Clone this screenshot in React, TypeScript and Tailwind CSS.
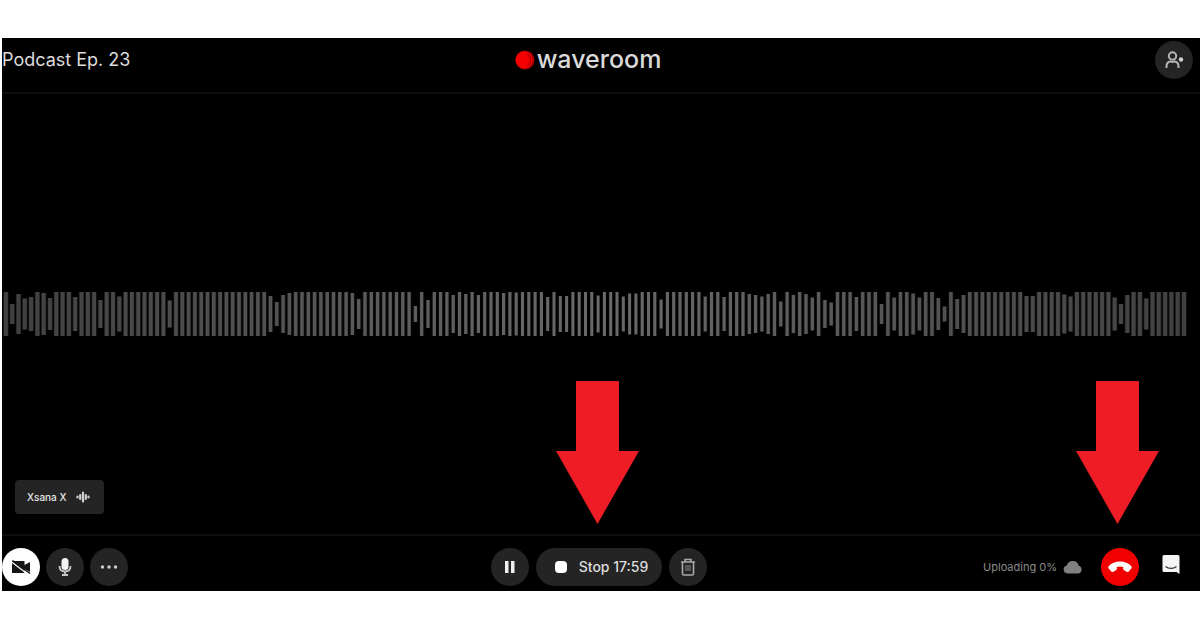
import type { ReactNode } from 'react'

const FULL = 44
const PITCH = 6.3

// Bar heights of the recorded track, left to right
const LEVELS: number[] = [
  44, 20, 40, 31, 34, 44, 42, 32, 44, 44, 44, 34, 44, 44, 44, 28, 44, 44, 35, 44,
  44, 44, 44, 44, 44, 44, 27, 44, 44, 44, 44, 44, 44, 44, 44, 44, 44, 44, 44, 44,
  44, 44, 36, 24, 38, 42, 44,
  44, 44, 44, 44, 44, 44, 44, 44, 42, 30, 44, 44, 44, 44, 44, 44, 44, 44, 16, 44,
  28, 44, 44, 44, 38, 44, 40, 44, 38, 44, 44, 44, 42, 44, 43, 44, 44, 44, 44, 34,
  44, 36, 36, 44, 44, 44, 44, 37,
  44, 44, 44, 35, 41, 41, 44, 44, 44, 29, 44, 44, 44, 44, 44, 44, 35, 44, 44, 34,
  44, 44, 44, 40, 38, 35, 40, 44, 25, 44, 38, 44, 40, 33, 44, 28, 23, 44, 44, 44,
  34, 44, 44, 44, 20, 44, 33,
  44, 44, 41, 33, 44, 44, 32, 15, 44, 30, 38, 44, 44, 44, 44, 44, 44, 44, 44, 44,
  36, 36, 44, 44, 44, 44, 39, 35, 44, 44, 44, 44, 44, 44, 33, 20, 38, 44, 44, 31,
  44, 44, 44, 44, 44, 44,
]

function Waveform() {
  const mid = LEVELS.length / 2
  return (
    <svg
      className="block h-11 w-full"
      viewBox={`0 0 1198 ${FULL}`}
      preserveAspectRatio="none"
      aria-hidden="true"
    >
      {LEVELS.map((level, i) => {
        // bars get wider, darker and closer together away from the middle
        const edge = Math.abs(i - mid) / mid
        const width = 3 + edge
        const shade = Math.round(106 - edge * 42)
        const gap = Math.round(edge * 26)
        const x = 3.9 + i * PITCH
        const y = (FULL - level) / 2
        return (
          <g key={i}>
            <rect x={x - 2.7} y={y} width={5.4} height={level} fill={`rgb(${gap},${gap},${gap})`} />
            <rect x={x - width / 2} y={y} width={width} height={level} fill={`rgb(${shade},${shade},${shade})`} />
          </g>
        )
      })}
    </svg>
  )
}

function RoundButton({ label, className, children }: { label: string; className: string; children: ReactNode }) {
  return (
    <button
      type="button"
      aria-label={label}
      className={`flex size-[38px] shrink-0 items-center justify-center rounded-full ${className}`}
    >
      {children}
    </button>
  )
}

function Arrow() {
  return (
    <svg width="83" height="143" viewBox="0 0 83 143" fill="#ee1c25" aria-hidden="true">
      <path d="M20 0h43v70h20L41.500 143 0 70h20z" />
    </svg>
  )
}

function Logo() {
  return (
    <div className="flex items-center gap-0.5 pr-[26px]">
      <svg width="20" height="20" viewBox="0 0 20 20" aria-hidden="true">
        <circle cx="10" cy="10" r="9.500" fill="#a80000" />
        <circle cx="9" cy="10" r="8.500" fill="#f40000" />
        <path d="M12.500 4.500a6.500 6.500 0 0 1 0 11" fill="none" stroke="#b00000" strokeWidth="1.300" />
      </svg>
      <span className="pb-0.5 text-[25px] leading-7 font-medium text-[#dadada]">waveroom</span>
    </div>
  )
}

export default function App() {
  return (
    <div className="bg-white pt-[38px] pl-0.5 font-['Inter',sans-serif]">
      <main className="bg-black text-white">
        <header className="grid grid-cols-[1fr_auto_1fr] items-center border-b-2 border-[#0e0e0e] pt-[3px] pb-[13px]">
          <h1 className="text-lg leading-6 text-[#dcdcdc]">Podcast Ep. 23</h1>
          <Logo />
          <div className="flex justify-end pr-[7px]">
            <RoundButton label="Invite guest" className="bg-[#242424]">
              <svg width="20" height="20" viewBox="0 0 20 20" fill="none" stroke="#b4b4b4" strokeWidth="2" aria-hidden="true">
                <circle cx="8.500" cy="6" r="3.700" />
                <path d="M2.500 18v-1.500c0-2.800 1.600-4.500 3.500-5M14.500 18v-1.500c0-2.800-1.600-4.500-3.500-5M5.500 11c2 1.200 4 1.200 6 0" />
                <circle cx="17" cy="9.500" r="2.200" fill="#d0d0d0" stroke="none" />
              </svg>
            </RoundButton>
          </div>
        </header>

        <section className="relative py-[198px]">
          <Waveform />

          <div className="absolute bottom-5 left-[13px] flex h-[34px] items-center gap-2.5 rounded bg-[#242424] pr-3.5 pl-3 text-[10px] leading-4 font-medium text-[#e6e6e6]">
            <span>Xsana X</span>
            <svg width="14" height="12" viewBox="0 0 14 12" stroke="#d0d0d0" strokeWidth="2.200" strokeLinecap="round" aria-hidden="true">
              <path d="M1.500 5.500v1M4.200 4v4M7 1.500v9M9.800 4v4M12.500 5.500v1" />
            </svg>
          </div>

          {/* Callouts over the stop and leave controls */}
          <div className="absolute bottom-2.5 left-1/2 -ml-[45px]">
            <Arrow />
          </div>
          <div className="absolute right-[41px] bottom-2.5">
            <Arrow />
          </div>
        </section>

        <footer className="grid grid-cols-[1fr_auto_1fr] items-center border-t-2 border-[#0e0e0e] pt-3 pb-[5px]">
          <div className="flex gap-1.5">
            <RoundButton label="Turn camera on" className="bg-white">
              <svg width="20" height="16" viewBox="0 0 20 16" aria-hidden="true">
                <path d="M1 2h12.500v4L19 3v10l-5.500-3v4H1z" fill="#161616" />
                <path d="M0 2.500 17 15.500" stroke="#ffffff" strokeWidth="1.200" />
                <path d="M1.500 1.500 19 14.500" stroke="#161616" strokeWidth="1.500" />
              </svg>
            </RoundButton>
            <RoundButton label="Mute microphone" className="bg-[#242424]">
              <svg width="14" height="20" viewBox="0 0 14 20" aria-hidden="true">
                <rect x="3.500" y="1" width="7" height="12" rx="3.500" fill="#f2f2f2" />
                <path d="M1.500 9c0 3.800 2.500 5.500 5.500 5.500s5.500-1.700 5.500-5.500M7 14.500v3.500M4 18h6" fill="none" stroke="#c8c8c8" strokeWidth="1.800" />
              </svg>
            </RoundButton>
            <RoundButton label="More options" className="bg-[#242424]">
              <svg width="18" height="4" viewBox="0 0 18 4" fill="#cfcfcf" aria-hidden="true">
                <circle cx="2.500" cy="2" r="1.700" />
                <circle cx="9" cy="2" r="1.700" />
                <circle cx="15.500" cy="2" r="1.700" />
              </svg>
            </RoundButton>
          </div>

          <div className="flex gap-[7px] pr-1">
            <RoundButton label="Pause recording" className="bg-[#242424]">
              <svg width="12" height="12" viewBox="0 0 12 12" fill="#f0f0f0" aria-hidden="true">
                <path d="M1 0h3.500v12H1zM7 0h3.500v12H7z" />
              </svg>
            </RoundButton>
            <button
              type="button"
              className="flex h-[38px] items-center gap-3 rounded-full bg-[#242424] pr-3.5 pl-[19px] text-sm leading-5 font-medium text-[#dedede]"
            >
              <span className="size-3 rounded-[4px] bg-white" />
              <span>Stop 17:59</span>
            </button>
            <RoundButton label="Delete recording" className="bg-[#242424]">
              <svg width="16" height="18" viewBox="0 0 16 18" fill="none" stroke="#a8a8a8" strokeWidth="1.600" aria-hidden="true">
                <path d="M1 4h14M5 4V1.500h6V4M2.500 4v11.500a1.500 1.500 0 0 0 1.500 1.500h8a1.500 1.500 0 0 0 1.500-1.500V4" />
                <path d="M6 7v6M8 7v6M10 7v6" stroke="#777777" strokeWidth="1.200" />
              </svg>
            </RoundButton>
          </div>

          <div className="flex items-center justify-end pr-[19px]">
            <span className="text-[11px] leading-4 text-[#8a8a8a]">Uploading 0%</span>
            <svg className="ml-1.5" width="20" height="16" viewBox="0 0 20 16" fill="#808080" aria-hidden="true">
              <path d="M4.500 14.500a4 4 0 0 1-.7-7.900 6.200 6.200 0 0 1 12 .2 4 4 0 0 1-.3 7.700z" />
            </svg>
            <RoundButton label="Leave room" className="ml-[18px] bg-[#f20000]">
              <svg width="26" height="14" viewBox="0 0 26 14" fill="#ffffff" aria-hidden="true">
                <path d="M13 1.500C8.500 1.500 4.500 3 1.700 6.200c-.6.700-.6 1.500 0 2.200l2.600 3c.6.700 1.300.8 2.100.3l2.800-1.800c.6-.4.8-.9.7-1.500l-.3-1.500c2.200-.7 4.600-.7 6.800 0l-.3 1.500c-.1.600.1 1.100.7 1.500l2.800 1.800c.8.500 1.500.4 2.100-.3l2.600-3c.6-.7.6-1.500 0-2.200C21.500 3 17.500 1.500 13 1.500z" />
              </svg>
            </RoundButton>
            <button type="button" aria-label="Open chat" className="mb-1.5 ml-[22px]">
              <svg width="20" height="20" viewBox="0 0 20 20" aria-hidden="true">
                <path d="M3 1h14a1.500 1.500 0 0 1 1.500 1.500V20l-3-2H3a1.500 1.500 0 0 1-1.500-1.500v-14A1.500 1.500 0 0 1 3 1z" fill="#f5f5f5" />
                <path d="M4.500 12.500c3.200 2.400 7.800 2.400 11 0" fill="none" stroke="#333333" strokeWidth="1.500" />
              </svg>
            </button>
          </div>
        </footer>
      </main>
    </div>
  )
}
